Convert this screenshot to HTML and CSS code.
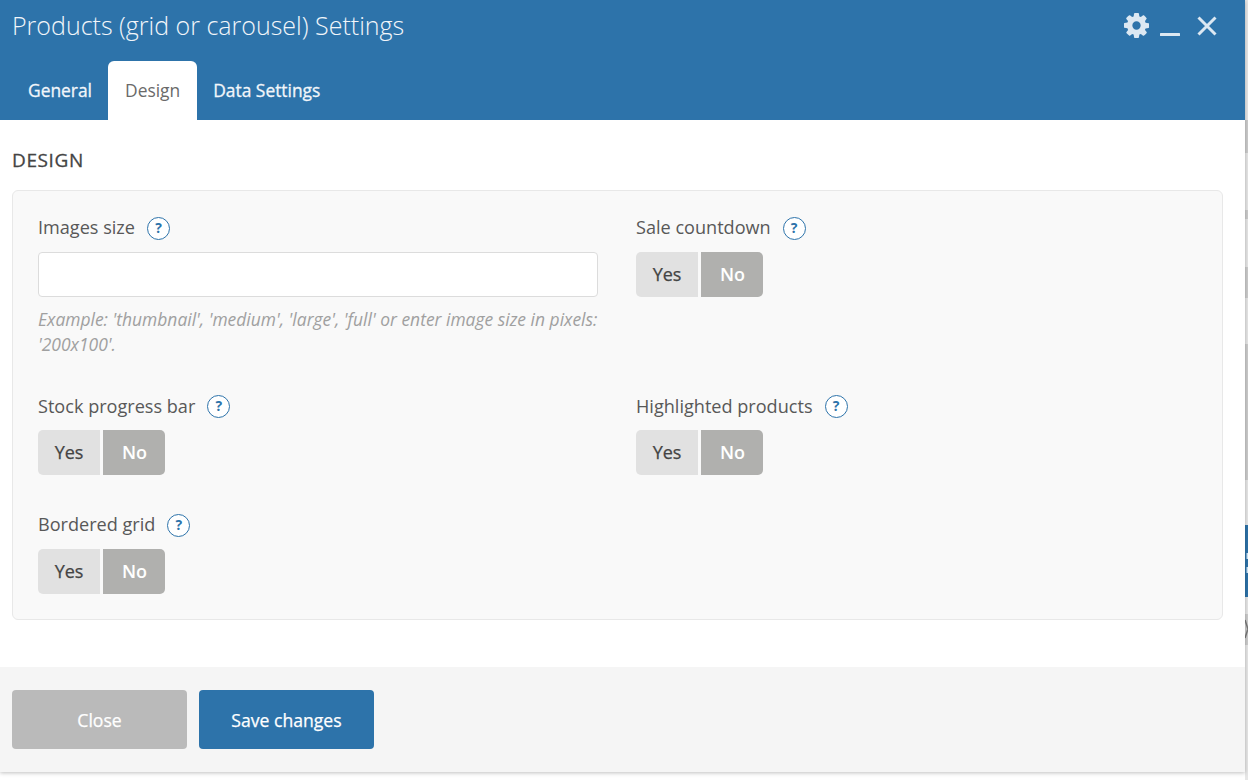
FILE: index.html
```html
<!DOCTYPE html>
<html lang="en">
<head>
<meta charset="utf-8">
<title>Products (grid or carousel) Settings</title>
<link rel="stylesheet" href="styles.css">
</head>
<body>
<div class="page">
  <div class="modal">
    <header class="modal-head">
      <div class="title-row">
        <h1 class="title">Products (grid or carousel) Settings</h1>
        <div class="win-actions">
          <svg class="ico-gear" viewBox="128 128 1536 1536" aria-hidden="true"><path d="M1152 896q0-106-75-181t-181-75-181 75-75 181 75 181 181 75 181-75 75-181zm512-109v222q0 12-8 23t-20 13l-185 28q-19 54-39 91 35 50 107 138 10 12 10 25t-9 23q-27 37-99 108t-94 71q-12 0-26-9l-138-108q-44 23-91 38-16 136-29 186-7 28-36 28h-222q-14 0-24.5-8.5t-11.5-21.5l-28-184q-49-16-90-37l-141 107q-10 9-25 9-14 0-25-11-126-114-165-168-7-10-7-23 0-12 8-23 15-21 51-66.5t54-70.5q-27-50-41-99l-183-27q-13-2-21-12.5t-8-23.5v-222q0-12 8-23t19-13l186-28q14-46 39-92-40-57-107-138-10-12-10-24 0-10 9-23 26-36 98.5-107.5t94.5-71.5q13 0 26 10l138 107q44-23 91-38 16-136 29-186 7-28 36-28h222q14 0 24.5 8.5t11.5 21.5l28 184q49 16 90 37l142-107q9-9 24-9 13 0 25 10 129 119 165 170 7 8 7 22 0 12-8 23-15 21-51 66.5t-54 70.5q26 50 41 98l183 28q13 2 21 12.5t8 23.5z"/></svg>
          <svg class="ico-min" viewBox="0 0 20 24" aria-hidden="true"><rect x="0" y="20" width="20" height="3" rx="0.5"/></svg>
          <svg class="ico-close" viewBox="0 0 20 20" aria-hidden="true"><path d="M1.5 1.5 18.5 18.5M18.5 1.5 1.5 18.5"/></svg>
        </div>
      </div>
      <nav class="tabs">
        <a class="tab">General</a>
        <a class="tab tab-active">Design</a>
        <a class="tab">Data Settings</a>
      </nav>
    </header>

    <main class="modal-body">
      <h2 class="section-title">Design</h2>
      <section class="panel">
        <div class="field">
          <div class="label-row"><span class="label">Images size</span><span class="help">?</span></div>
          <input class="text-input" type="text">
          <p class="hint">Example: 'thumbnail', 'medium', 'large', 'full' or enter image size in pixels: '200x100'.</p>
        </div>
        <div class="field">
          <div class="label-row"><span class="label">Sale countdown</span><span class="help">?</span></div>
          <div class="toggle"><span class="opt opt-yes">Yes</span><span class="opt opt-no">No</span></div>
        </div>
        <div class="field">
          <div class="label-row"><span class="label">Stock progress bar</span><span class="help">?</span></div>
          <div class="toggle"><span class="opt opt-yes">Yes</span><span class="opt opt-no">No</span></div>
        </div>
        <div class="field">
          <div class="label-row"><span class="label">Highlighted products</span><span class="help">?</span></div>
          <div class="toggle"><span class="opt opt-yes">Yes</span><span class="opt opt-no">No</span></div>
        </div>
        <div class="field">
          <div class="label-row"><span class="label">Bordered grid</span><span class="help">?</span></div>
          <div class="toggle"><span class="opt opt-yes">Yes</span><span class="opt opt-no">No</span></div>
        </div>
      </section>
    </main>

    <footer class="modal-foot">
      <button class="btn btn-close" type="button">Close</button>
      <button class="btn btn-save" type="button">Save changes</button>
    </footer>
  </div>

  <aside class="backdrop-strip" aria-hidden="true">
    <i class="band b120 light"></i>
    <i class="band b33 grey"></i>
    <i class="band b57 light"></i>
    <i class="band b9 grey"></i>
    <i class="band b48 light"></i>
    <i class="band b31 grey"></i>
    <i class="band b46 light"></i>
    <i class="band b136 grey"></i>
    <i class="band b45 light"></i>
    <i class="band b72 blue"><svg class="strip-art" viewBox="0 0 3 72"><path class="marks" d="M1.5 28h1.5v6h-1.5zM1.5 42h1.5v6h-1.5z"/></svg></i>
    <i class="band b17 light"></i>
    <i class="band b31 grey"><svg class="strip-art" viewBox="0 0 3 31"><path class="chevron" d="M0 6 3 15 0 24"/></svg></i>
    <i class="band b-rest light"></i>
  </aside>
</div>
</body>
</html>
```

FILE: styles.css
```css
* { box-sizing: border-box; }
html, body { margin: 0; padding: 0; height: 100%; overflow: hidden; background: #fff; }
body { font-family: "Open Sans", "Noto Sans", sans-serif; color: #555; }

.page { display: flex; align-items: flex-start; width: 1248px; height: 780px; overflow: hidden; }

.modal {
  position: relative;
  z-index: 1;
  flex: 0 0 1245px;
  height: 772px;
  display: flex;
  flex-direction: column;
  background: #fff;
  box-shadow: 0 1px 4px rgba(0, 0, 0, .25);
}

.backdrop-strip { flex: 0 0 3px; height: 780px; display: flex; flex-direction: column; }
.band { display: block; flex: none; }
.light { background: #e6e6e6; }
.grey { background: #cbcbcb; }
.blue { background: #2d72a8; }
.b120 { height: 120px; }
.b33 { height: 33px; }
.b57 { height: 57px; }
.b9 { height: 9px; }
.b48 { height: 48px; }
.b31 { height: 31px; }
.b46 { height: 46px; }
.b136 { height: 136px; }
.b45 { height: 45px; }
.b72 { height: 72px; }
.b17 { height: 17px; }
.b-rest { flex: 1; }
.strip-art { display: block; width: 3px; height: 100%; }
.marks { fill: #cfe6f7; }
.chevron { fill: none; stroke: #777; stroke-width: 1.5; }

/* Header */
.modal-head { height: 120px; background: #2d73aa; display: flex; flex-direction: column; }
.title-row { height: 61px; padding: 0 28px 0 12px; display: flex; justify-content: space-between; align-items: flex-start; }
.title { margin: 8px 0 0; font-size: 25px; line-height: 34px; font-weight: 300; color: #f2f6fa; }
.win-actions { display: flex; align-items: flex-start; }
.ico-gear { width: 25px; height: 25px; margin-top: 13px; fill: #dce8f2; }
.ico-min { width: 20px; height: 24px; margin: 13px 0 0 11px; fill: #dce8f2; }
.ico-close { width: 20px; height: 20px; margin: 16px 0 0 17px; fill: none; stroke: #dce8f2; stroke-width: 3; }

.tabs { display: flex; height: 59px; padding-left: 12px; }
.tab { padding: 0 16px; font-size: 17.4px; line-height: 59px; font-weight: 400; color: #f2f6fa; -webkit-text-stroke: .3px #f2f6fa; }
.tab-active { padding: 0 17px; background: #fff; color: #6a6a6a; -webkit-text-stroke: 0; border-radius: 6px 6px 0 0; }

/* Body */
.modal-body { flex: 1; padding: 0 22px 0 12px; }
.section-title { margin: 28px 0 18px; font-size: 19px; line-height: 24px; font-weight: 400; text-transform: uppercase; color: #444; letter-spacing: .6px; -webkit-text-stroke: .3px #444; }

.panel {
  height: 430px;
  padding: 25px 25px 0;
  background: #f9f9f9;
  border: 1px solid #e8e8e8;
  border-radius: 6px;
  display: grid;
  grid-template-columns: 560px 560px;
  grid-auto-rows: min-content;
  column-gap: 38px;
  row-gap: 38px;
}

.label-row { display: flex; align-items: center; height: 24px; margin-bottom: 11.5px; }
.label { margin-bottom: 2px; font-size: 18.1px; line-height: 24px; color: #585858; }
.help {
  width: 23px;
  height: 23px;
  margin-left: 12px;
  border: 1.5px solid #2d73aa;
  border-radius: 50%;
  background: #fff;
  color: #2d73aa;
  font-size: 14px;
  font-weight: 700;
  line-height: 20px;
  text-align: center;
}

.text-input {
  display: block;
  width: 100%;
  height: 45px;
  padding: 0 12px;
  background: #fff;
  border: 1px solid #dcdcdc;
  border-radius: 4px;
}

.hint { margin: 10.5px 0 -.5px; font-size: 17.45px; line-height: 25px; font-style: italic; color: #a0a0a0; }

.toggle { display: flex; gap: 3px; }
.opt { width: 62px; height: 45px; font-size: 18px; line-height: 45px; text-align: center; }
.opt-yes { background: #e1e1e1; color: #444; -webkit-text-stroke: .25px #444; border-radius: 5px 0 0 5px; }
.opt-no { padding-left: 1px; background: #b0b0ae; color: #fff; font-weight: 600; border-radius: 0 5px 5px 0; }

/* Footer */
.modal-foot { height: 105px; padding: 23px 12px 0; background: #f5f5f5; display: flex; align-items: flex-start; gap: 12px; }
.btn { width: 175px; height: 59px; border: 0; border-radius: 4px; font-family: inherit; font-size: 17.6px; font-weight: 400; color: #fff; -webkit-text-stroke: .25px #fff; }
.btn-close { background: #bababa; }
.btn-save { background: #2d73aa; }
```
